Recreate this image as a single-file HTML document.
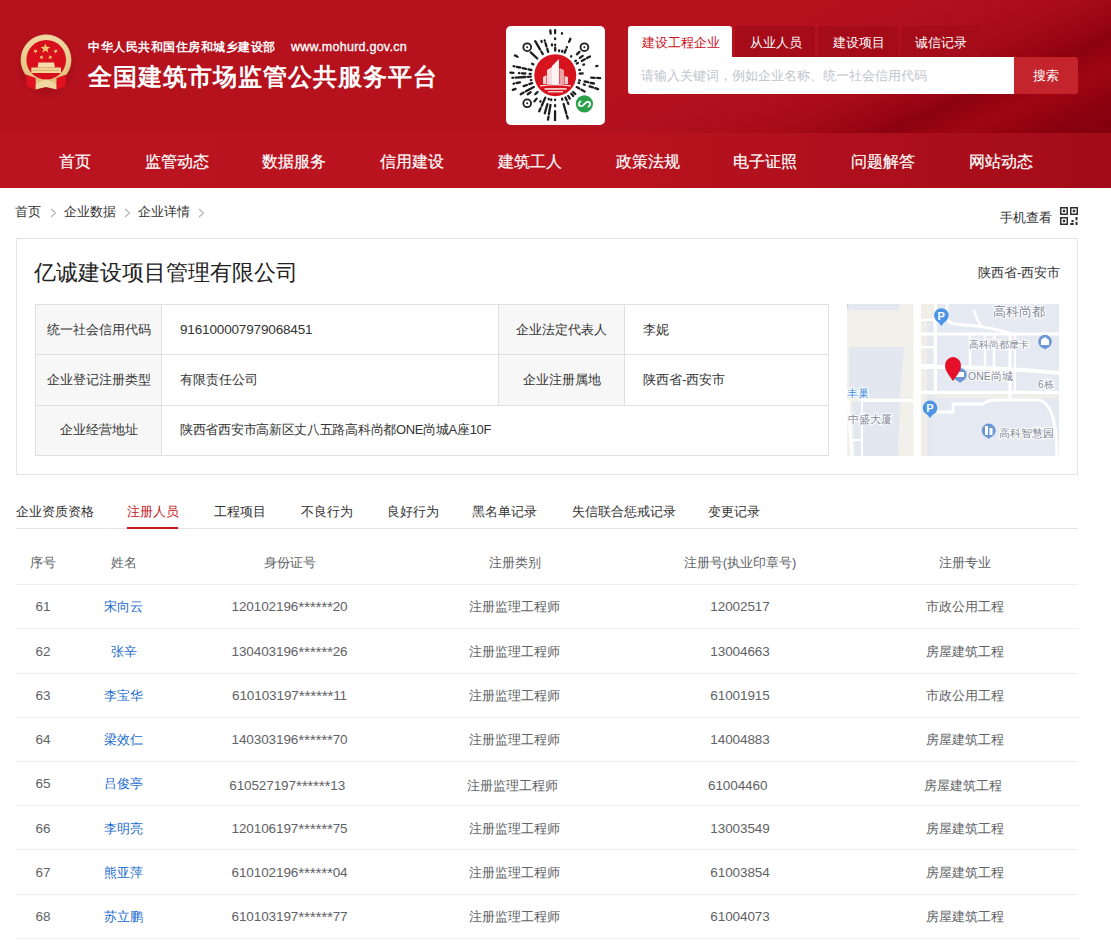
<!DOCTYPE html>
<html><head><meta charset="utf-8">
<style>
*{margin:0;padding:0;box-sizing:border-box}
html,body{width:1111px;height:944px;overflow:hidden;background:#fff}
body{position:relative;font-family:"Liberation Sans",sans-serif;color:#333}
.abs{position:absolute;white-space:nowrap}
#hdr{position:absolute;left:0;top:0;width:1111px;height:134px;background:linear-gradient(157deg,#b5121e 0%,#b5121e 58%,#b0101e 68%,#a80b18 76%,#9a0513 81%,#8c020f 84%,#a00612 89%,#8a010e 95%,#82000d 100%);overflow:hidden}
#nav{position:absolute;left:0;top:133px;width:1111px;height:55px;background:linear-gradient(90deg,#ba1420 0%,#b9131f 55%,#ad0f1c 80%,#a30b18 100%)}
.nv{position:absolute;top:151.5px;font-size:16px;line-height:20px;color:#fff;-webkit-text-stroke:0.2px #fff}
.bc{font-size:13px;line-height:16px;color:#333}
.card{position:absolute;left:16px;top:238px;width:1062px;height:237px;border:1px solid #e4e4e4}
table.info{position:absolute;left:35px;top:304px;border-collapse:collapse;width:794px}
table.info td{border:1px solid #e0e0e0;font-size:13px;color:#333;height:50.33px;padding:0}
table.info td.lb{background:#f7f7f7;text-align:center}
table.info td.v{padding-left:18px}
table.info td.num{font-size:13.5px;letter-spacing:-0.15px}
.tab{position:absolute;top:504px;font-size:13px;line-height:16px;color:#333}
.th{position:absolute;font-size:13px;color:#999}
.row{position:absolute;left:16px;width:1062px;border-bottom:1px solid #ebeef5}
.c{position:absolute;font-size:13px;color:#606266;text-align:center;white-space:nowrap}
.lnk{color:#1a6bd0}
.num{font-size:13.5px;letter-spacing:-0.1px}
.ast{font-size:15.5px;letter-spacing:-0.3px;line-height:0;position:relative;top:1px}
</style></head><body>
<div id="hdr"></div>
<div id="nav"></div>

<!-- emblem -->
<svg class="abs" style="left:12px;top:26.5px" width="70" height="74" viewBox="-6 -6 70 74">
<defs><radialGradient id="gsh" cx="0.5" cy="0.5" r="0.5"><stop offset="0.6" stop-color="#7a0008" stop-opacity="0.35"/><stop offset="1" stop-color="#7a0008" stop-opacity="0"/></radialGradient>
<linearGradient id="gold" x1="0" y1="0" x2="0" y2="1"><stop offset="0" stop-color="#f1d9a6"/><stop offset="1" stop-color="#e2bd78"/></linearGradient></defs>
<ellipse cx="28" cy="32" rx="32" ry="34" fill="url(#gsh)"/>
<circle cx="28" cy="26.9" r="25.3" fill="url(#gold)"/>
<circle cx="28" cy="26.9" r="25" fill="none" stroke="#d6ad6a" stroke-width="0.8" stroke-dasharray="1.5 1.5"/>
<circle cx="28.2" cy="26.8" r="19.8" fill="#d70f1c"/>
<polygon points="27.40,10.30 28.63,13.80 32.35,13.89 29.40,16.15 30.46,19.71 27.40,17.60 24.34,19.71 25.40,16.15 22.45,13.89 26.17,13.80" fill="#f0c96e"/>
<polygon points="18.75,16.03 18.41,17.79 19.95,18.72 18.17,18.94 17.76,20.69 17.00,19.07 15.22,19.22 16.52,17.99 15.83,16.34 17.40,17.21" fill="#f0c96e"/>
<polygon points="36.45,16.03 37.80,17.21 39.37,16.34 38.68,17.99 39.98,19.22 38.20,19.07 37.44,20.69 37.03,18.94 35.25,18.72 36.79,17.79" fill="#f0c96e"/>
<polygon points="24.22,21.98 24.38,23.67 26.00,24.17 24.44,24.84 24.46,26.54 23.34,25.27 21.73,25.81 22.60,24.35 21.59,22.99 23.24,23.37" fill="#f0c96e"/>
<polygon points="31.58,21.98 32.56,23.37 34.21,22.99 33.20,24.35 34.07,25.81 32.46,25.27 31.34,26.54 31.36,24.84 29.80,24.17 31.42,23.67" fill="#f0c96e"/>
<path d="M19.5 34.5 L20.5 29.5 L36 29.5 L37 34.5 Z" fill="#f3dcaa"/>
<rect x="13.3" y="34.5" width="29.7" height="5.5" fill="#f1d59a"/>
<rect x="15" y="36.8" width="26" height="1" fill="#d9b26c"/>
<path d="M8 41.5 L17.6 45 L17.6 56.6 L8.5 53.5 Z" fill="#e3101f"/>
<path d="M48 41.5 L38.5 45 L38.5 56.6 L47.5 53.5 Z" fill="#e3101f"/>
<path d="M17.6 50.5 L28 46.5 L38.5 50.5 L38.5 56.6 L28 54 L17.6 56.6 Z" fill="#f0d7a0"/>
</svg>
<div class="abs" style="left:88px;top:39.5px;font-size:12px;line-height:15px;font-weight:bold;color:#fff;letter-spacing:0.5px">中华人民共和国住房和城乡建设部</div>
<div class="abs" style="left:291px;top:40px;font-size:12.5px;line-height:15px;color:#fff;letter-spacing:0.25px;-webkit-text-stroke:0.3px #fff">www.mohurd.gov.cn</div>
<div class="abs" style="left:88px;top:62.5px;font-size:24px;line-height:28px;font-weight:bold;color:#fff;letter-spacing:1px">全国建筑市场监管公共服务平台</div>

<!-- QR -->
<!--qr--><svg class="abs" style="left:506px;top:26px" width="99" height="99" viewBox="0 0 99 99">
<rect width="99" height="99" rx="5" fill="#fff"/>
<path d="M85.2 51.6L88.7 51.8M91.2 51.9L94.2 52.1M73.3 54.3L73.9 54.5M78.6 55.5L82.1 56.2M84.5 56.8L87.9 57.5M72.6 56.8L73.2 57.0M77.8 58.5L78.8 58.8M83.5 60.4L86.9 61.4M89.2 62.2L92.1 63.2M70.7 61.1L73.3 62.6M75.5 63.8L78.6 65.5M67.1 66.0L69.3 68.0M65.3 67.7L67.3 70.0M62.2 70.0L63.8 72.6M59.4 71.5L60.7 74.2M61.7 76.5L62.3 77.9M56.1 72.7L56.3 73.7M57.6 78.0L60.2 87.2M60.9 89.6L61.7 92.4M49.1 73.7L49.1 74.1M49.1 79.2L49.1 80.3M49.1 85.2L49.0 94.2M45.3 73.4L45.2 74.2M44.5 78.8L42.9 88.2M42.5 90.6L42.0 93.6M42.8 72.8L42.7 73.3M41.4 78.1L38.8 87.3M39.3 71.6L35.7 79.8M34.6 82.1L33.2 85.3M34.5 75.3L34.3 75.6M30.6 72.6L28.4 75.4M31.5 66.1L29.3 68.1M24.6 66.2L21.7 68.2M27.8 61.0L19.9 65.3M17.7 66.5L14.7 68.2M26.1 57.2L23.3 58.2M20.9 59.0L17.6 60.1M9.6 62.9L6.8 63.9M25.3 54.1L24.8 54.2M14.0 56.3L10.6 57.0M8.1 57.5L7.6 57.7M24.8 50.7L21.9 50.9M19.4 51.0L9.9 51.6M7.4 51.7L6.4 51.8M24.8 47.8L23.6 47.8M19.3 47.5L15.9 47.4M13.4 47.2L12.9 47.2M7.4 46.9L4.4 46.7M25.4 44.0L22.4 43.4M20.0 42.8L16.6 42.1M14.1 41.5L10.7 40.8M8.3 40.3L7.6 40.1M27.3 38.4L26.1 37.8M11.6 30.7L8.9 29.4M31.3 32.5L24.7 26.4M36.8 28.1L35.3 25.5M34.0 23.4L29.2 15.2M35.7 15.9L35.4 15.0M42.1 25.8L41.3 22.9M40.5 20.5L39.5 17.2M38.8 14.8L38.7 14.4M46.0 19.4L45.9 18.5M44.7 7.5L44.3 4.5M49.2 24.7L49.2 21.7M49.2 19.2L49.2 18.7M49.1 13.2L49.1 12.5M49.1 7.2L49.1 4.2M53.1 25.0L53.2 24.5M55.9 7.7L56.0 7.2M56.1 25.7L56.4 24.8M58.7 26.6L59.8 23.8M60.8 21.5L60.9 21.1M63.1 15.9L64.4 12.7M65.1 30.5L65.3 30.2M70.9 28.3L73.4 25.9M69.3 35.1L69.9 34.7M73.8 31.9L76.7 29.9M70.8 37.5L71.9 36.9M75.7 34.9L78.8 33.2M81.0 32.1L84.0 30.4M77.4 38.7L78.1 38.5M73.2 43.9L73.9 43.8M90.3 40.2L91.4 39.9M73.7 47.6L76.7 47.4" stroke="#1e1e1e" stroke-width="2.3" stroke-linecap="round" fill="none"/>
<circle cx="21.2" cy="21.2" r="3.9" fill="none" stroke="#1e1e1e" stroke-width="1.8"/><circle cx="21.2" cy="21.2" r="1" fill="#1e1e1e"/><circle cx="78.4" cy="21.2" r="3.9" fill="none" stroke="#1e1e1e" stroke-width="1.8"/><circle cx="78.4" cy="21.2" r="1" fill="#1e1e1e"/><circle cx="21.2" cy="77.3" r="3.9" fill="none" stroke="#1e1e1e" stroke-width="1.8"/><circle cx="21.2" cy="77.3" r="1" fill="#1e1e1e"/>
<circle cx="49.3" cy="49.2" r="21" fill="#d7131e"/>
<path d="M46 58 L46 40 L53 33 L53 58 Z" fill="#fff" opacity="0.95"/>
<path d="M41 58 L41 44 L46 41 L46 58 Z" fill="#fff" opacity="0.85"/>
<path d="M53.5 58 L53.5 42 L58 44 L58 58 Z" fill="#fff" opacity="0.6"/>
<path d="M58.5 58 L58.5 50 L62 51 L62 58 Z" fill="#fff" opacity="0.8"/>
<path d="M37 58 L37 51 L40.5 49 L40.5 58 Z" fill="#fff" opacity="0.8"/>
<path d="M34 59.5 Q49.3 56.5 65 59.5 L65 60.5 Q49.3 58 34 60.5 Z" fill="#fff"/>
<rect x="38.5" y="62" width="22" height="1.8" fill="#f6c9c9"/>
<rect x="42" y="65" width="15" height="1.5" fill="#f6c9c9"/>
<circle cx="78.4" cy="77.9" r="8.6" fill="#2aa04a"/>
<path transform="rotate(50 78.5 78)" d="M74 79.5 C73.5 84 79 84 78.6 79.5 L78.3 76.5 C78 72 83.5 72 83 76.5" stroke="#fff" stroke-width="1.8" fill="none" stroke-linecap="round"/>
</svg><!--/qr-->

<!-- search -->
<div class="abs" style="left:628px;top:26px;width:104px;height:32px;background:#fff;border-radius:3px 3px 0 0"></div>
<div class="abs" style="left:642px;top:35px;font-size:13px;line-height:16px;color:#cc0f1b">建设工程企业</div>
<div class="abs" style="left:735px;top:26px;width:80px;height:31px;background:#a50b18;border-radius:3px 3px 0 0"></div>
<div class="abs" style="left:750px;top:35px;font-size:13px;line-height:16px;color:#fff">从业人员</div>
<div class="abs" style="left:818px;top:26px;width:80px;height:31px;background:#a50b18;border-radius:3px 3px 0 0"></div>
<div class="abs" style="left:833px;top:35px;font-size:13px;line-height:16px;color:#fff">建设项目</div>
<div class="abs" style="left:901px;top:26px;width:79px;height:31px;background:#a50b18;border-radius:3px 3px 0 0"></div>
<div class="abs" style="left:915px;top:35px;font-size:13px;line-height:16px;color:#fff">诚信记录</div>
<div class="abs" style="left:628px;top:57px;width:387px;height:37px;background:#fff;border-radius:0 0 0 3px"></div>
<div class="abs" style="left:641px;top:68px;font-size:13px;line-height:16px;color:#c0c4cc">请输入关键词，例如企业名称、统一社会信用代码</div>
<div class="abs" style="left:1014px;top:57px;width:64px;height:37px;background:#c4242b;border-radius:0 3px 3px 0"></div>
<div class="abs" style="left:1033px;top:68px;font-size:13px;line-height:16px;color:#fff">搜索</div>

<!-- nav -->
<div class="nv" style="left:59px">首页</div>
<div class="nv" style="left:145px">监管动态</div>
<div class="nv" style="left:262px">数据服务</div>
<div class="nv" style="left:380px">信用建设</div>
<div class="nv" style="left:498px">建筑工人</div>
<div class="nv" style="left:616px">政策法规</div>
<div class="nv" style="left:733px">电子证照</div>
<div class="nv" style="left:851px">问题解答</div>
<div class="nv" style="left:969px">网站动态</div>

<!-- breadcrumb -->
<div class="abs bc" style="left:15px;top:204px">首页</div>
<svg class="abs" style="left:49.5px;top:208px" width="7" height="10" viewBox="0 0 7 10"><path d="M1 1 L5.5 5 L1 9" fill="none" stroke="#b4b4b4" stroke-width="1.1"/></svg>
<div class="abs bc" style="left:64px;top:204px">企业数据</div>
<svg class="abs" style="left:123.5px;top:208px" width="7" height="10" viewBox="0 0 7 10"><path d="M1 1 L5.5 5 L1 9" fill="none" stroke="#b4b4b4" stroke-width="1.1"/></svg>
<div class="abs bc" style="left:138px;top:204px">企业详情</div>
<svg class="abs" style="left:197.5px;top:208px" width="7" height="10" viewBox="0 0 7 10"><path d="M1 1 L5.5 5 L1 9" fill="none" stroke="#b4b4b4" stroke-width="1.1"/></svg>
<div class="abs bc" style="left:1000px;top:209.5px">手机查看</div>
<svg class="abs" style="left:1059.5px;top:206.5px" width="18" height="18" viewBox="0 0 18 18" fill="#2e2e2e">
 <g fill="none" stroke="#2e2e2e" stroke-width="1.5"><rect x="0.75" y="0.75" width="6.5" height="6.5"/><rect x="10.75" y="0.75" width="6.5" height="6.5"/><rect x="0.75" y="10.75" width="6.5" height="6.5"/></g>
 <rect x="2.8" y="2.8" width="2.4" height="2.4"/><rect x="12.8" y="2.8" width="2.4" height="2.4"/><rect x="2.8" y="12.8" width="2.4" height="2.4"/>
 <rect x="15.5" y="10" width="2" height="3.2"/><rect x="11.5" y="13" width="2.2" height="2.2"/><rect x="15.5" y="14.8" width="2" height="3.2"/><rect x="10.2" y="16" width="3.5" height="2"/>
</svg>

<!-- company card -->
<div class="card"></div>
<div class="abs" style="left:34px;top:259px;font-size:22px;line-height:28px;color:#222">亿诚建设项目管理有限公司</div>
<div class="abs" style="left:978px;top:264.5px;font-size:13px;line-height:16px;color:#333">陕西省-西安市</div>
<table class="info">
<tr><td class="lb" style="width:126px">统一社会信用代码</td><td class="v num" style="width:337px">916100007979068451</td><td class="lb" style="width:126px">企业法定代表人</td><td class="v">李妮</td></tr>
<tr><td class="lb">企业登记注册类型</td><td class="v">有限责任公司</td><td class="lb">企业注册属地</td><td class="v">陕西省-西安市</td></tr>
<tr><td class="lb">企业经营地址</td><td class="v" colspan="3" style="letter-spacing:-0.3px">陕西省西安市高新区丈八五路高科尚都ONE尚城A座10F</td></tr>
</table>
<!--map--><svg class="abs" style="left:847px;top:304px" width="212" height="152" viewBox="0 0 212 152">
<rect width="212" height="152" fill="#e5e9f1"/>
<!-- left beige area -->
<rect x="0" y="0" width="67" height="152" fill="#f2f0eb"/>
<path d="M0 0 H52 V6 H0 Z" fill="#e3e8f0"/>
<path d="M2 43 H57 L53 94 H2 Z" fill="#e3e8f0"/>
<path d="M5 98 H53 L51 152 H8 Z" fill="#e3e8f0"/>
<path d="M1 96 L5 152" stroke="#fff" stroke-width="3"/>
<path d="M15 96.5 H67" stroke="#fff" stroke-width="3"/>
<path d="M15 96 V152" stroke="#fff" stroke-width="2"/>
<path d="M4 136 H16" stroke="#fff" stroke-width="2"/>
<path d="M0 -1 Q2 2 0 4" stroke="#c8d0dc" stroke-width="1" fill="none"/>
<!-- main white road -->
<rect x="66.5" y="0" width="7.5" height="152" fill="#fff"/>
<!-- right beige strip -->
<rect x="74" y="0" width="13" height="152" fill="#f1eee8"/>
<path d="M74 16 H87 M74 30 H87 M74 43 H87 M74 61 H87 M74 88 H87" stroke="#fff" stroke-width="2.5"/>
<rect x="80" y="17" width="6" height="12" fill="#e3e8f0"/>
<rect x="80" y="31" width="6" height="11" fill="#e3e8f0"/>
<rect x="80" y="45" width="6" height="15" fill="#e3e8f0"/>
<rect x="80" y="63" width="6" height="24" fill="#e3e8f0"/>
<rect x="80" y="91" width="7" height="61" fill="#e3e8f0"/>
<!-- roads right -->
<path d="M88.5 0 V90" stroke="#fff" stroke-width="3"/>
<path d="M74 30 H212" stroke="#fff" stroke-width="3"/>
<path d="M74 63 Q140 62 212 69" stroke="#fff" stroke-width="4" fill="none"/>
<path d="M74 88.5 H212" stroke="#fff" stroke-width="3.5"/>
<rect x="90" y="90.5" width="122" height="3.5" fill="#f1eee8"/>
<path d="M100 0 V12 Q100 19 108 20 L130 22 Q150 25 165 30" stroke="#fff" stroke-width="3" fill="none"/>
<path d="M127 6 Q130 18 135 22" stroke="#fff" stroke-width="2.5" fill="none"/>
<path d="M123 30 V62" stroke="#fff" stroke-width="2.5"/>
<path d="M138 30 V63 M147 30 V63" stroke="#fff" stroke-width="2.5"/>
<path d="M163 30 V95" stroke="#fff" stroke-width="3"/>
<path d="M168 30 V88" stroke="#fff" stroke-width="2"/>
<path d="M90 108 H106 V100 H136 Q140 96 150 96 H190 Q205 96 209 130 L210 152" stroke="#fff" stroke-width="3" fill="none"/>
<!-- labels -->
<g font-family="Liberation Sans, sans-serif" font-size="11" fill="#7f8796" stroke="#fff" stroke-width="2.2" paint-order="stroke" stroke-linejoin="round">
<text x="146" y="12" font-size="12.8">高科尚都</text>
<text x="122" y="44" font-size="10.4">高科尚都摩卡</text>
<text x="121" y="76" font-size="10.5">ONE尚城</text>
<text x="191" y="84" font-size="10">6栋</text>
<text x="152" y="133" font-size="10.5">高科智慧园</text>
<text x="1" y="119" font-size="10.5">中盛大厦</text>
<text x="0" y="93" font-size="10.5" fill="#3a8ee0">丰巢</text>
</g>
<!-- icons -->
<g>
<path d="M94.4 22 L90.5 17 Q87 12 89.5 8 Q94.4 2 99.3 8 Q101.8 12 98.3 17 Z" fill="#4c94e6"/>
<circle cx="94.4" cy="11.5" r="7.3" fill="#4c94e6"/>
<text x="90.6" y="15.8" font-family="Liberation Sans, sans-serif" font-size="11" font-weight="bold" fill="#fff">P</text>
<path d="M83 114 L79 109 Q75.5 104 78 100 Q83 94 88 100 Q90.5 104 87 109 Z" fill="#4c94e6"/>
<circle cx="83" cy="103.8" r="7.3" fill="#4c94e6"/>
<text x="79.2" y="108" font-family="Liberation Sans, sans-serif" font-size="11" font-weight="bold" fill="#fff">P</text>
<circle cx="198" cy="37.6" r="6.8" fill="#6c97d6"/>
<path d="M198 45.5 L195 43 H201 Z" fill="#6c97d6"/>
<path d="M194 41 V36 L198 33 L202 36 V41 Z" fill="#fff"/>
<circle cx="141.7" cy="126.6" r="7" fill="#6c97d6"/>
<path d="M141.7 135 L138.5 132 H145 Z" fill="#6c97d6"/>
<path d="M138 131 V122 H141 V131 M142.5 131 V124 H145.5 V131" fill="#fff"/>
<circle cx="113" cy="70.7" r="6.8" fill="#6c97d6"/>
<path d="M113 79 L110 76 H116 Z" fill="#6c97d6"/>
<rect x="109" y="68" width="8" height="5" fill="#fff"/>
<path d="M106 77 Q100 69 98.5 65 Q97 58 101 55 Q106 51 111 55 Q115 58 113.5 65 Q112 69 106 77 Z" fill="#e60f2a"/>
</g>
</svg><!--/map-->

<!-- tabs -->
<div class="tab" style="left:16px">企业资质资格</div>
<div class="tab" style="left:127px;color:#c8161e">注册人员</div>
<div class="tab" style="left:214px">工程项目</div>
<div class="tab" style="left:301px">不良行为</div>
<div class="tab" style="left:387px">良好行为</div>
<div class="tab" style="left:472px">黑名单记录</div>
<div class="tab" style="left:572px">失信联合惩戒记录</div>
<div class="tab" style="left:708px">变更记录</div>
<div class="abs" style="left:16px;top:528px;width:1062px;height:1px;background:#e4e4e4"></div>
<div class="abs" style="left:127px;top:527px;width:51px;height:2px;background:#c8161e"></div>

<div id="tbl"><div class="c th" style="left:16px;width:54px;top:555.30px;line-height:16px">序号</div>
<div class="c th" style="left:70px;width:107px;top:555.30px;line-height:16px">姓名</div>
<div class="c th" style="left:177px;width:225px;top:555.30px;line-height:16px">身份证号</div>
<div class="c th" style="left:402px;width:225.5px;top:555.30px;line-height:16px">注册类别</div>
<div class="c th" style="left:627.5px;width:225.0px;top:555.30px;line-height:16px">注册号(执业印章号)</div>
<div class="c th" style="left:852.5px;width:225.5px;top:555.30px;line-height:16px">注册专业</div>
<div class="abs" style="left:16px;top:584px;width:1062px;height:1px;background:#ebeef5"></div>
<div class="c num" style="left:16px;width:54px;top:599.30px;line-height:16px">61</div>
<div class="c lnk" style="left:70px;width:107px;top:599.30px;line-height:16px">宋向云</div>
<div class="c num" style="left:177px;width:225px;top:599.30px;line-height:16px">120102196<span class="ast">******</span>20</div>
<div class="c" style="left:402px;width:225.5px;top:599.30px;line-height:16px">注册监理工程师</div>
<div class="c num" style="left:627.5px;width:225.0px;top:599.30px;line-height:16px">12002517</div>
<div class="c" style="left:852.5px;width:225.5px;top:599.30px;line-height:16px">市政公用工程</div>
<div class="abs" style="left:16px;top:628px;width:1062px;height:1px;background:#ebeef5"></div>
<div class="c num" style="left:16px;width:54px;top:643.54px;line-height:16px">62</div>
<div class="c lnk" style="left:70px;width:107px;top:643.54px;line-height:16px">张辛</div>
<div class="c num" style="left:177px;width:225px;top:643.54px;line-height:16px">130403196<span class="ast">******</span>26</div>
<div class="c" style="left:402px;width:225.5px;top:643.54px;line-height:16px">注册监理工程师</div>
<div class="c num" style="left:627.5px;width:225.0px;top:643.54px;line-height:16px">13004663</div>
<div class="c" style="left:852.5px;width:225.5px;top:643.54px;line-height:16px">房屋建筑工程</div>
<div class="abs" style="left:16px;top:673px;width:1062px;height:1px;background:#ebeef5"></div>
<div class="c num" style="left:16px;width:54px;top:687.78px;line-height:16px">63</div>
<div class="c lnk" style="left:70px;width:107px;top:687.78px;line-height:16px">李宝华</div>
<div class="c num" style="left:177px;width:225px;top:687.78px;line-height:16px">610103197<span class="ast">******</span>11</div>
<div class="c" style="left:402px;width:225.5px;top:687.78px;line-height:16px">注册监理工程师</div>
<div class="c num" style="left:627.5px;width:225.0px;top:687.78px;line-height:16px">61001915</div>
<div class="c" style="left:852.5px;width:225.5px;top:687.78px;line-height:16px">市政公用工程</div>
<div class="abs" style="left:16px;top:717px;width:1062px;height:1px;background:#ebeef5"></div>
<div class="c num" style="left:16px;width:54px;top:732.02px;line-height:16px">64</div>
<div class="c lnk" style="left:70px;width:107px;top:732.02px;line-height:16px">梁效仁</div>
<div class="c num" style="left:177px;width:225px;top:732.02px;line-height:16px">140303196<span class="ast">******</span>70</div>
<div class="c" style="left:402px;width:225.5px;top:732.02px;line-height:16px">注册监理工程师</div>
<div class="c num" style="left:627.5px;width:225.0px;top:732.02px;line-height:16px">14004883</div>
<div class="c" style="left:852.5px;width:225.5px;top:732.02px;line-height:16px">房屋建筑工程</div>
<div class="abs" style="left:16px;top:761px;width:1062px;height:1px;background:#ebeef5"></div>
<div class="c num" style="left:16px;width:54px;top:776.26px;line-height:16px">65</div>
<div class="c lnk" style="left:70px;width:107px;top:776.26px;line-height:16px">吕俊亭</div>
<div class="c num" style="left:174.7px;width:225px;top:777.76px;line-height:16px">610527197<span class="ast">******</span>13</div>
<div class="c" style="left:399.7px;width:225.5px;top:777.76px;line-height:16px">注册监理工程师</div>
<div class="c num" style="left:625.2px;width:225.0px;top:777.76px;line-height:16px">61004460</div>
<div class="c" style="left:850.2px;width:225.5px;top:777.76px;line-height:16px">房屋建筑工程</div>
<div class="abs" style="left:16px;top:805px;width:1062px;height:1px;background:#ebeef5"></div>
<div class="c num" style="left:16px;width:54px;top:820.50px;line-height:16px">66</div>
<div class="c lnk" style="left:70px;width:107px;top:820.50px;line-height:16px">李明亮</div>
<div class="c num" style="left:177px;width:225px;top:820.50px;line-height:16px">120106197<span class="ast">******</span>75</div>
<div class="c" style="left:402px;width:225.5px;top:820.50px;line-height:16px">注册监理工程师</div>
<div class="c num" style="left:627.5px;width:225.0px;top:820.50px;line-height:16px">13003549</div>
<div class="c" style="left:852.5px;width:225.5px;top:820.50px;line-height:16px">房屋建筑工程</div>
<div class="abs" style="left:16px;top:849px;width:1062px;height:1px;background:#ebeef5"></div>
<div class="c num" style="left:16px;width:54px;top:864.74px;line-height:16px">67</div>
<div class="c lnk" style="left:70px;width:107px;top:864.74px;line-height:16px">熊亚萍</div>
<div class="c num" style="left:177px;width:225px;top:864.74px;line-height:16px">610102196<span class="ast">******</span>04</div>
<div class="c" style="left:402px;width:225.5px;top:864.74px;line-height:16px">注册监理工程师</div>
<div class="c num" style="left:627.5px;width:225.0px;top:864.74px;line-height:16px">61003854</div>
<div class="c" style="left:852.5px;width:225.5px;top:864.74px;line-height:16px">房屋建筑工程</div>
<div class="abs" style="left:16px;top:894px;width:1062px;height:1px;background:#ebeef5"></div>
<div class="c num" style="left:16px;width:54px;top:908.98px;line-height:16px">68</div>
<div class="c lnk" style="left:70px;width:107px;top:908.98px;line-height:16px">苏立鹏</div>
<div class="c num" style="left:177px;width:225px;top:908.98px;line-height:16px">610103197<span class="ast">******</span>77</div>
<div class="c" style="left:402px;width:225.5px;top:908.98px;line-height:16px">注册监理工程师</div>
<div class="c num" style="left:627.5px;width:225.0px;top:908.98px;line-height:16px">61004073</div>
<div class="c" style="left:852.5px;width:225.5px;top:908.98px;line-height:16px">房屋建筑工程</div>
<div class="abs" style="left:16px;top:938px;width:1062px;height:1px;background:#ebeef5"></div></div><!--/tbl-->
</body></html>
